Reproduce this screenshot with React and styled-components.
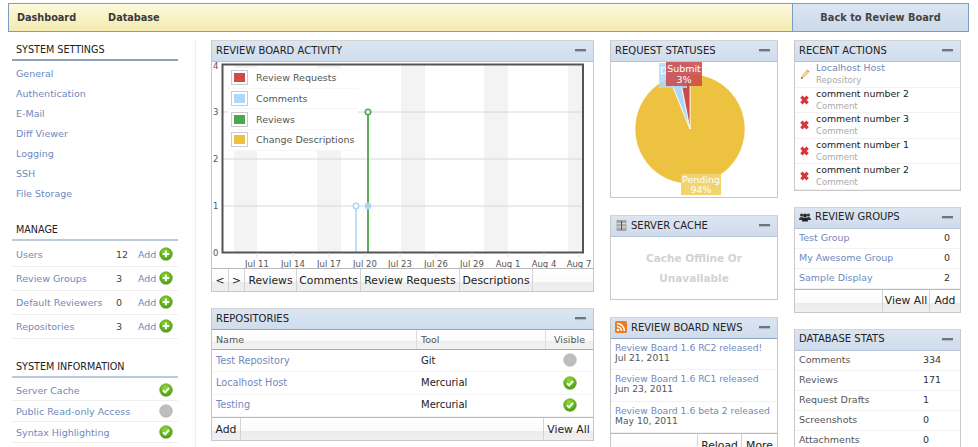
import React, { useId } from "react"
import styled, { createGlobalStyle } from 'styled-components'

const GlobalStyle = createGlobalStyle`
  html, body {
    margin: 0;
    height: 447px;
    overflow: hidden;
    background: #fff;
  }
  body {
    font-family: "DejaVu Sans", Verdana, sans-serif;
    font-size: 9.5px;
    color: #333;
  }
`

const Page = styled.div`
  width: 978px;
  height: 447px;
  overflow: hidden;
  padding-top: 3px;
  box-sizing: border-box;
`

const TopBar = styled.div`
  display: flex;
  margin-left: 8px;
  width: 961px;
  height: 29px;
  border: 1px solid #7d9cc2;
  box-sizing: border-box;
`

const TopNav = styled.div`
  flex: 1;
  display: flex;
  align-items: center;
  gap: 32px;
  padding-left: 8px;
  background: linear-gradient(#fdf9dc, #f8f1c4 55%, #f3eab2);
  border-right: 1px solid #7d9cc2;
  font-weight: bold;
  font-size: 9.7px;
  color: #3a3a3a;
`

const BackLink = styled.div`
  width: 175px;
  display: flex;
  align-items: center;
  justify-content: center;
  background: linear-gradient(#dbe6f2, #cbd9e9);
  font-weight: bold;
  font-size: 9.8px;
  color: #444;
`

const Main = styled.div`
  display: flex;
  margin-top: 8px;
`

const Sidebar = styled.aside`
  width: 166px;
  margin-left: 12px;
  margin-right: 17px;
  flex-shrink: 0;
`

const SideSection = styled.section`
  margin-bottom: ${p => p.$gap}px;
`

const SideHeading = styled.h2`
  margin: 0;
  height: 19px;
  line-height: 19px;
  padding-left: 4px;
  border-bottom: 2px solid ${p => p.$soft ? '#bccbdc' : '#8ba3bd'};
  font-size: 9.6px;
  font-weight: normal;
  color: #222;
`

const LinkList = styled.div`
  padding-top: 3px;
`

const SideLink = styled.div`
  height: 20px;
  line-height: 20px;
  padding-left: 4px;
  color: #7089bd;
`

const ManageList = styled.div`
  padding-top: 2px;
`

const ManageRow = styled.div`
  display: grid;
  grid-template-columns: 100px 22px 1fr;
  align-items: center;
  height: 24px;
  padding-left: 4px;
  padding-bottom: 1px;
  border-bottom: 1px solid #f0f0f0;
  box-sizing: border-box;
  color: #7089bd;
`

const Count = styled.span`
  color: #444;
`

const AddLink = styled.span`
  display: flex;
  align-items: center;
  gap: 3px;
`

const InfoList = styled.div`
  padding-top: 2px;
`

const InfoRow = styled.div`
  display: flex;
  align-items: center;
  justify-content: space-between;
  height: 21px;
  padding: 0 5px 0 4px;
  border-bottom: 1px solid #f0f0f0;
  box-sizing: border-box;
  color: #7089bd;
`

const Content = styled.div`
  display: grid;
  grid-template-columns: 383px 168px 167px;
  column-gap: 16px;
  align-items: start;
  padding-left: 15px;
  border-left: 1px solid #eee;
  height: 420px;
`

const Column = styled.div`
  display: flex;
  flex-direction: column;
  gap: ${p => p.$gap}px;
`

const Panel = styled.section`
  border: 1px solid #c8c8c8;
  border-top-color: #d4d4d4;
  background: #fff;
`

const PanelHeader = styled.header`
  display: flex;
  align-items: center;
  gap: 4px;
  height: 21px;
  padding: 0 5px 2px 4px;
  box-sizing: border-box;
  background: linear-gradient(#dce6f2, #cfdcec);
  border-bottom: 1px solid ${p => p.$dark ? '#8ea6c2' : '#b4c5d9'};
  font-size: 10px;
  color: #222;
  white-space: nowrap;
`

const PanelTitle = styled.span`
  flex: 1;
`

const Collapse = styled.span`
  width: 11px;
  height: 2px;
  margin-right: 2px;
  background: #6d7580;
  box-shadow: 0 1px 1px #aab8c8;
`

const Toolbar = styled.div`
  display: flex;
  height: 23px;
  box-sizing: border-box;
  border-top: 1px solid #b8b8b8;
  background: linear-gradient(#fff 0, #fbfbfb 60%, #ececec 60%, #f0f0f0);
`

const ToolButton = styled.div`
  display: flex;
  align-items: center;
  justify-content: center;
  width: ${p => p.$w}px;
  border-right: ${p => p.$plain ? 'none' : '1px solid #d4d4d4'};
  border-left: ${p => p.$left ? '1px solid #d4d4d4' : 'none'};
  box-sizing: border-box;
  font-size: 10.8px;
  color: #222;
`

const ToolFill = styled.div`
  flex: ${p => p.$w ? `0 0 ${p.$w}px` : 1};
  border-right: ${p => p.$w ? '1px solid #d4d4d4' : 'none'};
  box-sizing: border-box;
`

const ChartArea = styled.div`
  position: relative;
  height: 206px;
  svg { display: block; }
`

const Legend = styled.div`
  position: absolute;
  left: 16px;
  top: 6px;
  width: 130px;
  background: #fff;
`

const LegendRow = styled.div`
  display: flex;
  align-items: center;
  gap: 9px;
  height: 20.7px;
  padding-left: 4px;
  border-bottom: 1px solid #f6f6f6;
  box-sizing: border-box;
  font-size: 9.5px;
  color: #555;
  white-space: nowrap;
`

const Swatch = styled.span`
  width: 11px;
  height: 9px;
  background: ${p => p.$color};
  border: 2px solid #fff;
  outline: 1px solid #ccc;
  flex-shrink: 0;
`

const TableHead = styled.div`
  display: grid;
  grid-template-columns: 205px 129px 1fr;
  height: 20px;
  box-sizing: border-box;
  border-bottom: 1px solid #a8a8a8;
  background: linear-gradient(#fff, #fbfbfb 60%, #efefef 60%, #f3f3f3);
`

const HeadCell = styled.div`
  display: flex;
  align-items: center;
  justify-content: ${p => p.$center ? 'center' : 'flex-start'};
  padding-left: ${p => p.$center ? 0 : 4}px;
  border-right: ${p => p.$center ? 'none' : '1px solid #ddd'};
  color: #555;
`

const RepoRow = styled.div`
  display: grid;
  grid-template-columns: 205px 129px 1fr;
  align-items: center;
  height: 22.4px;
  padding-bottom: 1px;
  border-bottom: 1px solid #f4f4f4;
  box-sizing: border-box;
`

const RepoName = styled.span`
  padding-left: 4px;
  font-size: 9.7px;
  color: #7089bd;
`

const RepoTool = styled.span`
  padding-left: 4px;
  font-size: 10px;
  color: #222;
`

const RepoVisible = styled.span`
  display: flex;
  justify-content: center;
`

const CacheNote = styled.div`
  height: 62px;
  padding-top: 11px;
  box-sizing: border-box;
  text-align: center;
  font-weight: bold;
  font-size: 10.5px;
  line-height: 20px;
  color: #d2d2d2;
`

const NewsItem = styled.div`
  height: 31.4px;
  padding: 4px 0 0 4px;
  border-bottom: 1px solid #f2f2f2;
  box-sizing: border-box;
  font-size: 9.2px;
  line-height: 10px;
  white-space: nowrap;
  color: #555;
`

const NewsLink = styled.div`
  color: #7089bd;
`

const ActionRow = styled.div`
  display: grid;
  grid-template-columns: 16px 1fr;
  align-items: center;
  height: 25.5px;
  border-bottom: 1px solid #f2f2f2;
  box-sizing: border-box;
  padding-left: 5px;
`

const ActionName = styled.div`
  line-height: 12px;
  font-size: 9.4px;
  color: ${p => p.$link ? '#7089bd' : '#222'};
`

const ActionKind = styled.div`
  line-height: 12px;
  font-size: 8.5px;
  color: #aaa;
`

const StatRow = styled.div`
  display: grid;
  grid-template-columns: ${p => p.$wide ? '124px' : '145px'} 1fr;
  align-items: center;
  height: 20px;
  padding-left: 4px;
  padding-bottom: 1px;
  border-bottom: 1px solid #f2f2f2;
  box-sizing: border-box;
  color: ${p => p.$link ? '#7089bd' : '#555'};
`

const StatValue = styled.span`
  color: #333;
`

const PlusIcon = () => {
  const id = useId()
  return (
    <svg width="14" height="14" viewBox="0 0 14 14">
      <defs>
        <radialGradient id={id} cx="0.45" cy="0.35" r="0.7">
          <stop offset="0" stopColor="#9ad838" />
          <stop offset="1" stopColor="#3f9a0c" />
        </radialGradient>
      </defs>
      <circle cx="7" cy="7" r="6.3" fill={`url(#${id})`} stroke="#4c9f18" strokeWidth="0.6" />
      <path d="M7 3.7v6.6M3.7 7h6.6" stroke="#fff" strokeWidth="2" />
    </svg>
  )
}

const CheckIcon = () => {
  const id = useId()
  return (
    <svg width="14" height="14" viewBox="0 0 14 14">
      <defs>
        <radialGradient id={id} cx="0.45" cy="0.3" r="0.75">
          <stop offset="0" stopColor="#9ad838" />
          <stop offset="1" stopColor="#3f9a0c" />
        </radialGradient>
      </defs>
      <circle cx="7" cy="7" r="6.3" fill={`url(#${id})`} stroke="#4c9f18" strokeWidth="0.6" />
      <path d="M4 7.2l2.2 2.2L10 5" fill="none" stroke="#fff" strokeWidth="2" />
    </svg>
  )
}

const GrayDot = () => (
  <svg width="14" height="14" viewBox="0 0 14 14">
    <circle cx="7" cy="7" r="6.3" fill="#bdbdbd" stroke="#adadad" strokeWidth="0.6" />
  </svg>
)

const RemoveIcon = () => (
  <svg width="9" height="10" viewBox="0 0 9 10">
    <path d="M1.4 1.6l6.2 6.8M7.6 1.6L1.4 8.4" stroke="#d8343a" strokeWidth="3.2" />
  </svg>
)

const PencilIcon = () => (
  <svg width="10" height="11" viewBox="0 0 10 11">
    <path d="M6.5 1.5l2 2-5.5 5.5-2 .5.5-2z" fill="#f1d68b" stroke="#d6b76a" strokeWidth="0.5" />
    <path d="M6.5 1.5l1-1 2 2-1 1z" fill="#e88ac0" />
    <path d="M1 10l.5-2 1.5 1.5z" fill="#555" />
  </svg>
)

const RssIcon = () => (
  <svg width="12" height="12" viewBox="0 0 12 12">
    <rect width="12" height="12" rx="1.5" fill="#ec7d23" />
    <circle cx="3" cy="9" r="1.3" fill="#fff" />
    <path d="M2 5.6a4.4 4.4 0 0 1 4.4 4.4M2 2.6A7.4 7.4 0 0 1 9.4 10" fill="none" stroke="#fff" strokeWidth="1.5" />
  </svg>
)

const CacheIcon = () => (
  <svg width="12" height="11" viewBox="-1.5 0 12 11">
    <rect x="0.5" y="0.5" width="9" height="10" fill="#a8a8a8" stroke="#8a8a8a" strokeWidth="0.6" />
    <path d="M.5 3.7h9M.5 7h9" stroke="#e8e8e8" strokeWidth="1" />
    <path d="M5 1v9" stroke="#555" strokeWidth="1" />
  </svg>
)

const GroupIcon = () => (
  <svg width="12" height="10" viewBox="0 0 12 10">
    <circle cx="2.6" cy="3" r="1.6" fill="#333" />
    <circle cx="9.4" cy="3" r="1.6" fill="#333" />
    <circle cx="6" cy="3.4" r="1.9" fill="#222" />
    <path d="M0 8c0-2 1-3 2.6-3S5 6 5 8zM7 8c0-2 1-3 2.4-3S12 6 12 8z" fill="#333" />
    <path d="M3 9.5C3 7 4.2 5.6 6 5.6S9 7 9 9.5z" fill="#222" />
  </svg>
)

const bands = [[234, 23], [317, 24], [401, 24], [484, 24], [568, 15]]
const ticks = [
  ['Jul 11', 257], ['Jul 14', 293], ['Jul 17', 329], ['Jul 20', 365], ['Jul 23', 400],
  ['Jul 26', 436], ['Jul 29', 472], ['Aug 1', 508], ['Aug 4', 544], ['Aug 7', 579],
]
const yLabels = [[4, 68], [3, 114], [2, 161], [1, 208], [0, 255]]
const legend = [
  ['Review Requests', '#cb4b4b'],
  ['Comments', '#afd8f8'],
  ['Reviews', '#4da74d'],
  ['Change Descriptions', '#edc240'],
]

const ActivityChart = () => (
  <ChartArea>
    <svg width="381" height="206" viewBox="212 61 381 206">
      {bands.map(([x, w]) => <rect key={x} x={x} y="64" width={w} height="187" fill="#f3f3f3" />)}
      {[111, 158, 205].map(y => <line key={y} x1="222" x2="583" y1={y} y2={y} stroke="#d8d8d8" />)}
      <line x1="356" x2="356" y1="205" y2="251" stroke="#afd8f8" strokeWidth="1.6" />
      <circle cx="356" cy="205" r="2.7" fill="#fff" stroke="#afd8f8" strokeWidth="1.6" />
      <line x1="368" x2="368" y1="111" y2="251" stroke="#5cac5c" strokeWidth="2" />
      <circle cx="368" cy="205" r="2.7" fill="#b7cfdc" stroke="#afd8f8" strokeWidth="1.4" />
      <circle cx="368" cy="111" r="2.7" fill="#fff" stroke="#4da74d" strokeWidth="1.6" />
      <rect x="222.5" y="63.5" width="360.5" height="188" fill="none" stroke="#545454" strokeWidth="2" />
      {yLabels.map(([n, y]) => (
        <text key={n} x="213" y={y} fontSize="8.5" fontFamily="DejaVu Sans" fill="#555">{n}</text>
      ))}
      {ticks.map(([t, x]) => (
        <g key={t}>
          <line x1={x} x2={x} y1="252" y2="256" stroke="#ddd" />
          <text x={x} y="266" fontSize="8.5" fontFamily="DejaVu Sans" fill="#555" textAnchor="middle">{t}</text>
        </g>
      ))}
    </svg>
    <Legend>
      {legend.map(([label, color]) => (
        <LegendRow key={label}>
          <Swatch $color={color} />
          {label}
        </LegendRow>
      ))}
    </Legend>
  </ChartArea>
)

const polar = (deg, r = 55) => {
  const a = (deg - 90) * Math.PI / 180
  return [79 + r * Math.cos(a), 67 + r * Math.sin(a)]
}

const slice = (from, to) => {
  const [x1, y1] = polar(from)
  const [x2, y2] = polar(to)
  const large = to - from > 180 ? 1 : 0
  return `M79 67L${x1} ${y1}A55 55 0 ${large} 1 ${x2} ${y2}Z`
}

const StatusPie = () => (
  <svg width="166" height="135" viewBox="0 0 166 135" style={{ display: 'block' }}>
    <path d={slice(0, 338)} fill="#edc240" stroke="#fff" strokeWidth="0.6" />
    <path d={slice(338, 349)} fill="#afd8f8" stroke="#fff" strokeWidth="0.8" />
    <path d={slice(349, 360)} fill="#cb4b4b" stroke="#fff" strokeWidth="0.8" />
    <rect x="48" y="1" width="28" height="25" fill="#afd8f8" opacity="0.85" />
    <text x="49" y="12" fontSize="9.5" fontFamily="DejaVu Sans" fill="#fff">D</text>
    <rect x="55" y="0" width="36" height="24" fill="#cb4b4b" opacity="0.88" />
    <text x="73" y="10" fontSize="9.5" fontFamily="DejaVu Sans" fill="#fff" textAnchor="middle">Submit</text>
    <text x="73" y="21" fontSize="9.5" fontFamily="DejaVu Sans" fill="#fff" textAnchor="middle">3%</text>
    <rect x="70" y="112" width="40" height="21" fill="#f2d36e" />
    <text x="90" y="120.5" fontSize="9.5" fontFamily="DejaVu Sans" fill="#fff" textAnchor="middle">Pending</text>
    <text x="90" y="131" fontSize="9.5" fontFamily="DejaVu Sans" fill="#fff" textAnchor="middle">94%</text>
  </svg>
)

const Header = ({ title, icon, dark }) => (
  <PanelHeader $dark={dark}>
    {icon}
    <PanelTitle>{title}</PanelTitle>
    <Collapse />
  </PanelHeader>
)

const repos = [
  ['Test Repository', 'Git', false],
  ['Localhost Host', 'Mercurial', true],
  ['Testing', 'Mercurial', true],
]
const news = [
  ['Review Board 1.6 RC2 released!', 'Jul 21, 2011'],
  ['Review Board 1.6 RC1 released', 'Jun 23, 2011'],
  ['Review Board 1.6 beta 2 released', 'May 10, 2011'],
]
const actions = ['comment number 2', 'comment number 3', 'comment number 1', 'comment number 2']

const App = () => {
  return (
    <Page>
      <GlobalStyle />
      <TopBar>
        <TopNav>
          <span>Dashboard</span>
          <span>Database</span>
        </TopNav>
        <BackLink>Back to Review Board</BackLink>
      </TopBar>
      <Main>
        <Sidebar>
          <SideSection $gap={16}>
            <SideHeading>SYSTEM SETTINGS</SideHeading>
            <LinkList>
              {['General', 'Authentication', 'E-Mail', 'Diff Viewer', 'Logging', 'SSH', 'File Storage'].map(l => (
                <SideLink key={l}>{l}</SideLink>
              ))}
            </LinkList>
          </SideSection>
          <SideSection $gap={18}>
            <SideHeading $soft>MANAGE</SideHeading>
            <ManageList>
              {[['Users', 12], ['Review Groups', 3], ['Default Reviewers', 0], ['Repositories', 3]].map(([name, n]) => (
                <ManageRow key={name}>
                  <span>{name}</span>
                  <Count>{n}</Count>
                  <AddLink>Add <PlusIcon /></AddLink>
                </ManageRow>
              ))}
            </ManageList>
          </SideSection>
          <SideSection>
            <SideHeading $soft>SYSTEM INFORMATION</SideHeading>
            <InfoList>
              <InfoRow>Server Cache <CheckIcon /></InfoRow>
              <InfoRow>Public Read-only Access <GrayDot /></InfoRow>
              <InfoRow>Syntax Highlighting <CheckIcon /></InfoRow>
            </InfoList>
          </SideSection>
        </Sidebar>
        <Content>
          <Column $gap={16}>
            <Panel>
              <Header title="REVIEW BOARD ACTIVITY" />
              <ActivityChart />
              <Toolbar>
                <ToolButton $w={17}>&lt;</ToolButton>
                <ToolButton $w={16}>&gt;</ToolButton>
                <ToolButton $w={52}>Reviews</ToolButton>
                <ToolButton $w={64}>Comments</ToolButton>
                <ToolButton $w={99}>Review Requests</ToolButton>
                <ToolButton $w={73}>Descriptions</ToolButton>
                <ToolFill />
              </Toolbar>
            </Panel>
            <Panel>
              <Header title="REPOSITORIES" dark />
              <TableHead>
                <HeadCell>Name</HeadCell>
                <HeadCell>Tool</HeadCell>
                <HeadCell $center>Visible</HeadCell>
              </TableHead>
              {repos.map(([name, tool, visible]) => (
                <RepoRow key={name}>
                  <RepoName>{name}</RepoName>
                  <RepoTool>{tool}</RepoTool>
                  <RepoVisible>{visible ? <CheckIcon /> : <GrayDot />}</RepoVisible>
                </RepoRow>
              ))}
              <Toolbar>
                <ToolButton $w={29}>Add</ToolButton>
                <ToolFill />
                <ToolButton $w={50} $left $plain>View All</ToolButton>
              </Toolbar>
            </Panel>
          </Column>
          <Column $gap={17}>
            <Panel>
              <Header title="REQUEST STATUSES" />
              <StatusPie />
            </Panel>
            <Panel>
              <Header title="SERVER CACHE" icon={<CacheIcon />} />
              <CacheNote>Cache Offline Or<br />Unavailable</CacheNote>
            </Panel>
            <Panel>
              <Header title="REVIEW BOARD NEWS" icon={<RssIcon />} dark />
              {news.map(([title, date]) => (
                <NewsItem key={title}>
                  <NewsLink>{title}</NewsLink>
                  {date}
                </NewsItem>
              ))}
              <Toolbar>
                <ToolFill $w={87} />
                <ToolButton $w={44}>Reload</ToolButton>
                <ToolButton $w={35} $plain>More</ToolButton>
              </Toolbar>
            </Panel>
          </Column>
          <Column $gap={16}>
            <Panel>
              <Header title="RECENT ACTIONS" />
              <ActionRow>
                <PencilIcon />
                <div>
                  <ActionName $link>Localhost Host</ActionName>
                  <ActionKind>Repository</ActionKind>
                </div>
              </ActionRow>
              {actions.map((name, i) => (
                <ActionRow key={i}>
                  <RemoveIcon />
                  <div>
                    <ActionName>{name}</ActionName>
                    <ActionKind>Comment</ActionKind>
                  </div>
                </ActionRow>
              ))}
            </Panel>
            <Panel>
              <Header title="REVIEW GROUPS" icon={<GroupIcon />} />
              {[['Test Group', 0], ['My Awesome Group', 0], ['Sample Display', 2]].map(([name, n]) => (
                <StatRow key={name} $link>
                  <span>{name}</span>
                  <StatValue>{n}</StatValue>
                </StatRow>
              ))}
              <Toolbar>
                <ToolFill />
                <ToolButton $w={48} $left>View All</ToolButton>
                <ToolButton $w={30} $plain>Add</ToolButton>
              </Toolbar>
            </Panel>
            <Panel>
              <Header title="DATABASE STATS" />
              {[['Comments', 334], ['Reviews', 171], ['Request Drafts', 1], ['Screenshots', 0], ['Attachments', 0]].map(([name, n]) => (
                <StatRow key={name} $wide>
                  <span>{name}</span>
                  <StatValue>{n}</StatValue>
                </StatRow>
              ))}
            </Panel>
          </Column>
        </Content>
      </Main>
    </Page>
  )
}

export default App
